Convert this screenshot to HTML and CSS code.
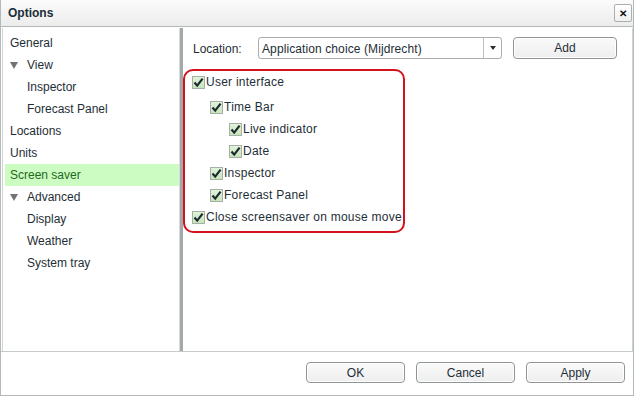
FILE: index.html
```html
<!DOCTYPE html>
<html>
<head>
<meta charset="utf-8">
<link rel="stylesheet" href="styles.css">
</head>
<body>
<div class="window">
  <div class="titlebar">
    <span class="title">Options</span>
    <span class="close">&#x2715;</span>
  </div>
  <div class="main">
    <div class="tree">
      <div class="item">General</div>
      <div class="item parent"><span class="tri"></span>View</div>
      <div class="item child">Inspector</div>
      <div class="item child">Forecast Panel</div>
      <div class="item">Locations</div>
      <div class="item">Units</div>
      <div class="item selected">Screen saver</div>
      <div class="item parent"><span class="tri"></span>Advanced</div>
      <div class="item child">Display</div>
      <div class="item child">Weather</div>
      <div class="item child">System tray</div>
    </div>
    <div class="splitter"></div>
    <div class="content">
      <div class="locrow">
        <span class="loclabel">Location:</span>
        <div class="combo">
          <span class="combotext">Application choice (Mijdrecht)</span>
          <span class="comboarrow"><span class="arrow"></span></span>
        </div>
        <button class="btn add">Add</button>
      </div>
      <div class="checks">
        <div class="row first l0"><span class="cb"><svg width="11" height="11" viewBox="0 0 11 11"><path d="M1.5 5.5 L4.2 8.6 L9.6 1.6" fill="none" stroke="#1c2a30" stroke-width="2.2"/></svg></span>User interface</div>
        <div class="row l1"><span class="cb"><svg width="11" height="11" viewBox="0 0 11 11"><path d="M1.5 5.5 L4.2 8.6 L9.6 1.6" fill="none" stroke="#1c2a30" stroke-width="2.2"/></svg></span>Time Bar</div>
        <div class="row l2"><span class="cb"><svg width="11" height="11" viewBox="0 0 11 11"><path d="M1.5 5.5 L4.2 8.6 L9.6 1.6" fill="none" stroke="#1c2a30" stroke-width="2.2"/></svg></span>Live indicator</div>
        <div class="row l2"><span class="cb"><svg width="11" height="11" viewBox="0 0 11 11"><path d="M1.5 5.5 L4.2 8.6 L9.6 1.6" fill="none" stroke="#1c2a30" stroke-width="2.2"/></svg></span>Date</div>
        <div class="row l1"><span class="cb"><svg width="11" height="11" viewBox="0 0 11 11"><path d="M1.5 5.5 L4.2 8.6 L9.6 1.6" fill="none" stroke="#1c2a30" stroke-width="2.2"/></svg></span>Inspector</div>
        <div class="row l1"><span class="cb"><svg width="11" height="11" viewBox="0 0 11 11"><path d="M1.5 5.5 L4.2 8.6 L9.6 1.6" fill="none" stroke="#1c2a30" stroke-width="2.2"/></svg></span>Forecast Panel</div>
        <div class="row l0"><span class="cb"><svg width="11" height="11" viewBox="0 0 11 11"><path d="M1.5 5.5 L4.2 8.6 L9.6 1.6" fill="none" stroke="#1c2a30" stroke-width="2.2"/></svg></span>Close screensaver on mouse move</div>
      </div>
    </div>
  </div>
  <div class="footer">
    <button class="btn">OK</button>
    <button class="btn">Cancel</button>
    <button class="btn">Apply</button>
  </div>
</div>
</body>
</html>
```
FILE: styles.css
```css
html, body {
  margin: 0;
  padding: 0;
  background: #ffffff;
}
body {
  font-family: "Liberation Sans", Arial, sans-serif;
  font-size: 12px;
  color: #1e2e36;
}
.window {
  width: 634px;
  height: 396px;
  box-sizing: border-box;
  border: 1px solid #b4b9b9;
  border-top: none;
  display: flex;
  flex-direction: column;
  background: #fff;
}
.titlebar {
  height: 27px;
  box-sizing: border-box;
  border-bottom: 1px solid #b2b7b7;
  background: linear-gradient(#fbfbfb, #ececec);
  display: flex;
  align-items: center;
  justify-content: space-between;
  padding: 0 1px 1px 7px;
}
.title {
  font-weight: bold;
  font-size: 12px;
  color: #1a2d3a;
}
.close {
  width: 16px;
  height: 16px;
  border: 1px solid #a9aeae;
  border-radius: 2px;
  background: linear-gradient(#ffffff, #f0f0f0);
  display: flex;
  align-items: center;
  justify-content: center;
  font-size: 10px;
  font-weight: bold;
  color: #111;
  margin-top: 1px;
}
.main {
  height: 325px;
  display: flex;
  border-bottom: 1px solid #c5caca;
  padding: 1px 0 0 1px;
  box-sizing: border-box;
}
.tree {
  width: 178px;
  box-sizing: border-box;
  border-left: 1px solid #cfd3d3;
  border-right: 1px solid #d7dada;
  padding: 4px 0 0 2px;
}
.item {
  height: 22px;
  line-height: 22px;
  padding-left: 5px;
  display: flex;
  align-items: center;
  white-space: nowrap;
}
.item.parent, .item.child {
  padding-left: 22px;
}
.item.parent {
  position: relative;
}
.tri {
  position: absolute;
  left: 5px;
  top: 8px;
  width: 0;
  height: 0;
  border-left: 4px solid transparent;
  border-right: 4px solid transparent;
  border-top: 7px solid #737373;
}
.item.selected {
  background: #cdfcc2;
  color: #1c6a1c;
}
.splitter {
  width: 3px;
  background: #a3a8a8;
}
.content {
  flex: 1;
  border-right: 1px solid #cfd3d3;
  padding-top: 9px;
}
.locrow {
  display: flex;
  align-items: center;
  height: 22px;
  padding-left: 10px;
}
.loclabel {
  width: 65px;
  padding-top: 1px;
}
.combo {
  width: 244px;
  height: 22px;
  box-sizing: border-box;
  border: 1px solid #a8aeae;
  border-radius: 3px;
  display: flex;
  align-items: center;
  background: #fff;
}
.combotext {
  flex: 1;
  padding-left: 3px;
  padding-top: 1px;
  white-space: nowrap;
  letter-spacing: 0.1px;
}
.comboarrow {
  width: 17px;
  height: 20px;
  border-left: 1px solid #b9bebe;
  display: flex;
  align-items: center;
  justify-content: center;
}
.arrow {
  width: 0;
  height: 0;
  border-left: 3.5px solid transparent;
  border-right: 3.5px solid transparent;
  border-top: 4px solid #2a2f33;
}
.btn {
  font-family: "Liberation Sans", Arial, sans-serif;
  font-size: 12px;
  color: #1e2e36;
  width: 99px;
  height: 21px;
  box-sizing: border-box;
  border: 1px solid #8f9595;
  border-radius: 4px;
  background: linear-gradient(#fafafa, #eeeeee);
  box-shadow: inset 0 0 0 1px #ffffff;
  padding: 0;
}
.btn.add {
  width: 104px;
  height: 22px;
  margin-left: 11px;
}
.checks {
  margin-top: 10px;
  width: 222px;
  box-sizing: border-box;
  border: 2px solid #d4121c;
  border-radius: 10px;
  padding: 2px 0 5px 7px;
  display: flex;
  flex-direction: column;
  gap: 4px;
}
.row {
  height: 18px;
  display: flex;
  align-items: center;
  white-space: nowrap;
  letter-spacing: 0.25px;
}
.row.first {
  margin-bottom: 3px;
}
.row.l1 { padding-left: 18px; }
.row.l2 { padding-left: 37px; }
.cb {
  width: 13px;
  height: 13px;
  box-sizing: border-box;
  border: 1px solid #a7b0a7;
  background: linear-gradient(#e2f3da, #c6e4ba);
  display: flex;
  align-items: center;
  justify-content: center;
  margin-right: 1px;
}
.cb svg {
  display: block;
}
.footer {
  flex: 1;
  display: flex;
  justify-content: flex-end;
  align-items: flex-start;
  gap: 11px;
  padding: 10px 8px 0 0;
}
```
